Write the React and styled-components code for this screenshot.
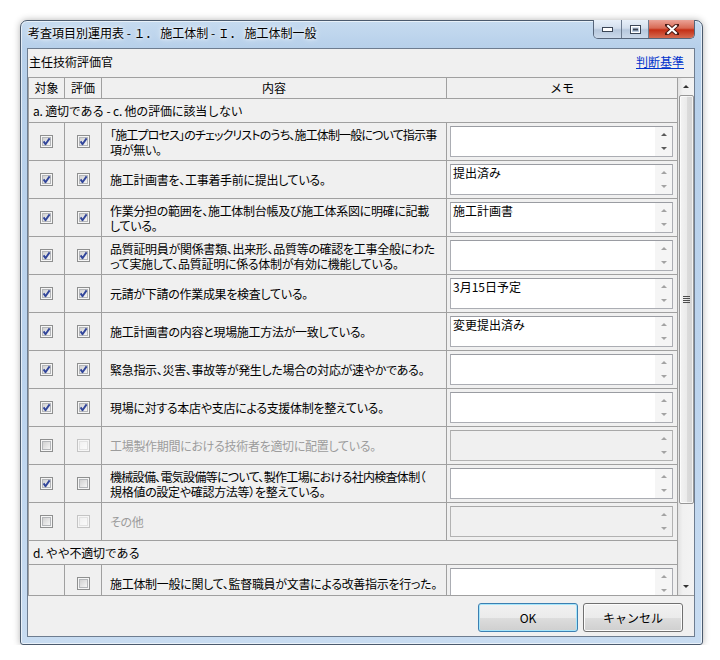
import React, { useId } from "react";
import styled, { createGlobalStyle } from "styled-components";

const GlobalStyle = createGlobalStyle`
  html, body { margin: 0; background: #ffffff; }
  body {
    font-family: "Noto Sans CJK JP", "Noto Sans", sans-serif;
    font-size: 12px;
    color: #000;
  }
  *, *::before, *::after { box-sizing: border-box; }
`;

const Page = styled.div`
  padding: 20px 0 0 20px;
`;

const Window = styled.div`
  width: 683px;
  height: 625px;
  display: flex;
  flex-direction: column;
  padding: 0 7px 7px 6px;
  border: 1px solid #4b5a6d;
  border-radius: 7px 7px 3px 3px;
  background: linear-gradient(180deg, #c6dbf0 0px, #b7d0ea 26px, #bcd4ee 60%, #c8dcf1 100%);
  box-shadow: 0 0 7px rgba(0, 0, 0, 0.3), inset 0 0 0 1px rgba(255, 255, 255, 0.6);
`;

const TitleBar = styled.div`
  height: 27px;
  display: flex;
  align-items: flex-start;
`;

const Title = styled.div`
  flex: 1;
  padding: 3px 0 0 1px;
  font-size: 12px;
  line-height: 18px;
  text-shadow: 0 0 6px #fff, 0 0 3px #fff;
`;

const Controls = styled.div`
  display: flex;
  height: 19px;
  margin-top: -1px;
  border: 1px solid #56657a;
  border-top: none;
  border-radius: 0 0 5px 5px;
  overflow: hidden;
`;

const CtlButton = styled.div`
  width: ${(p) => p.$w}px;
  display: flex;
  align-items: center;
  justify-content: center;
  background: ${(p) =>
    p.$close
      ? "linear-gradient(180deg, #eba397 0%, #d86a55 45%, #c42f16 55%, #d56c52 100%)"
      : "linear-gradient(180deg, #e8f0f9 0%, #d3dfed 45%, #b6c7dc 55%, #cbd9ea 100%)"};
  & + & {
    border-left: 1px solid #6c7b8f;
  }
`;

const Client = styled.div`
  flex: 1;
  min-height: 0;
  display: flex;
  flex-direction: column;
  background: #f0f0f0;
  border: 1px solid #6e7d90;
`;

const TopBar = styled.div`
  height: 28px;
  display: flex;
  align-items: center;
  justify-content: space-between;
  padding: 0 10px 3px 1px;
  line-height: 16px;
`;

const Link = styled.a`
  color: #0033cc;
  text-decoration: underline;
  cursor: pointer;
`;

const GridPanel = styled.div`
  flex: 1;
  min-height: 0;
  display: flex;
  overflow: hidden;
  border-top: 1px solid #a0a0a0;
  border-bottom: 1px solid #a0a0a0;
`;

const Table = styled.div`
  width: 650px;
  border-left: 1px solid #a0a0a0;
  overflow: hidden;
`;

const Row = styled.div`
  display: grid;
  grid-template-columns: 36px 37px 345px 231px;
  height: ${(p) => p.$h}px;
  flex-shrink: 0;
  border-bottom: 1px solid #a0a0a0;
`;

const Cell = styled.div`
  display: flex;
  align-items: center;
  justify-content: ${(p) => (p.$center ? "center" : "flex-start")};
  border-right: 1px solid #a0a0a0;
  min-width: 0;
`;

const HeadCell = styled(Cell)`
  justify-content: center;
  line-height: 16px;
`;

const SectionRow = styled.div`
  height: 24px;
  display: flex;
  align-items: center;
  padding-left: 4px;
  letter-spacing: -0.2px;
  border-right: 1px solid #a0a0a0;
  border-bottom: 1px solid #a0a0a0;
`;

const Content = styled.div`
  padding-left: 8px;
  line-height: 15px;
  white-space: nowrap;
  letter-spacing: -0.3px;
  font-feature-settings: "palt";
  color: ${(p) => (p.$disabled ? "#9c9c9c" : "#000")};
`;

const Line = styled.div`
  letter-spacing: ${(p) => (p.$ls != null ? `${p.$ls}px` : "inherit")};
`;

const MemoCell = styled.div`
  display: flex;
  padding: 3px 4px 3px 3px;
  border-right: 1px solid #a0a0a0;
`;

const MemoBox = styled.div`
  flex: 1;
  display: flex;
  border: 1px solid ${(p) => (p.$disabled ? "#b2b2b2" : "#abadb3")};
  border-top-color: ${(p) => (p.$disabled ? "#a8a8a8" : "#9a9ca2")};
  background: ${(p) => (p.$disabled ? "#f0f0f0" : "#ffffff")};
`;

const MemoText = styled.div`
  flex: 1;
  padding: 1px 2px;
  line-height: 14px;
  white-space: nowrap;
`;

const Spin = styled.div`
  width: 17px;
  display: flex;
  flex-direction: column;
  background: ${(p) => (p.$disabled ? "transparent" : "#f5f5f5")};
`;

const SpinHalf = styled.div`
  flex: 1;
  display: flex;
  align-items: center;
  justify-content: center;
`;

const Tri = styled.span`
  width: 0;
  height: 0;
  border-left: 3px solid transparent;
  border-right: 3px solid transparent;
  ${(p) => (p.$down ? "border-top" : "border-bottom")}: 3px solid ${(p) => p.$color};
`;

const ScrollBar = styled.div`
  width: 16px;
  display: flex;
  flex-direction: column;
  background: linear-gradient(90deg, #e2e2e2 0%, #f1f1f1 30%, #f3f3f3 100%);
`;

const ArrowBtn = styled.div`
  height: 17px;
  display: flex;
  align-items: center;
  justify-content: center;
`;

const Track = styled.div`
  flex: 1;
  padding: 0 0 0 1px;
`;

const Thumb = styled.div`
  height: 409px;
  border: 1px solid #979797;
  border-radius: 2px;
  background: linear-gradient(90deg, #f3f3f3 0%, #ebebeb 50%, #dcdcdc 51%, #d4d4d4 100%);
  box-shadow: inset 0 0 0 1px rgba(255, 255, 255, 0.7);
  display: flex;
  flex-direction: column;
  align-items: center;
  justify-content: center;
  gap: 1px;
`;

const Grip = styled.span`
  width: 7px;
  height: 1px;
  background: #4e4e4e;
`;

const ButtonBar = styled.div`
  height: 40px;
  display: flex;
  justify-content: flex-end;
  gap: 5px;
  padding: 7px 11px 0 0;
`;

const Button = styled.button`
  width: 100px;
  height: 29px;
  font-family: inherit;
  font-size: 12px;
  font-weight: 400;
  color: #000;
  border: 1px solid ${(p) => (p.$default ? "#3c7fb1" : "#707070")};
  border-radius: 3px;
  background: linear-gradient(180deg, #f2f2f2 0%, #ebebeb 50%, #dddddd 51%, #cfcfcf 100%);
  box-shadow: inset 0 0 0 1px ${(p) => (p.$default ? "#a6e6fb" : "#fcfcfc")};
  padding: 0;
`;

function CheckBox({ state }) {
  const gid = useId().replace(/:/g, "");
  if (state === "none") return null;
  const faint = state === "disabled";
  return (
    <svg width="13" height="13" viewBox="0 0 13 13">
      <defs>
        <linearGradient id={gid} x1="0" y1="0" x2="1" y2="1">
          <stop offset="0" stopColor={faint ? "#f0f0f0" : "#cfcfcf"} />
          <stop offset="1" stopColor={faint ? "#fbfbfb" : "#f7f7f7"} />
        </linearGradient>
      </defs>
      <rect x="0.5" y="0.5" width="12" height="12" fill="#f6f6f6" stroke={faint ? "#c4c4c4" : "#8e8f8f"} />
      <rect x="2.5" y="2.5" width="8" height="8" fill={`url(#${gid})`} stroke={faint ? "#e2e2e2" : "#b4b6b9"} />
      {state === "checked" && (
        <path d="M3.6 6.4 L5.5 9.2 L9.6 3.4" stroke="#31459a" strokeWidth="1.9" fill="none" strokeLinejoin="round" />
      )}
    </svg>
  );
}

function Memo({ text, disabled, dark }) {
  const col = dark ? "#5a5a5a" : "#a3a3a3";
  return (
    <MemoCell>
      <MemoBox $disabled={disabled}>
        <MemoText>{text}</MemoText>
        <Spin $disabled={disabled}>
          <SpinHalf>
            <Tri $color={col} />
          </SpinHalf>
          <SpinHalf>
            <Tri $down $color={col} />
          </SpinHalf>
        </Spin>
      </MemoBox>
    </MemoCell>
  );
}

const sectionA = [
  { a: "checked", b: "checked", lines: ["「施工プロセス」のチェックリストのうち、施工体制一般について指示事", "項が無い。"], ls: [-0.85], memo: "", dark: true },
  { a: "checked", b: "checked", lines: ["施工計画書を、工事着手前に提出している。"], memo: "提出済み" },
  { a: "checked", b: "checked", lines: ["作業分担の範囲を、施工体制台帳及び施工体系図に明確に記載", "している。"], memo: "施工計画書" },
  { a: "checked", b: "checked", lines: ["品質証明員が関係書類、出来形、品質等の確認を工事全般にわた", "って実施して、品質証明に係る体制が有効に機能している。"], memo: "" },
  { a: "checked", b: "checked", lines: ["元請が下請の作業成果を検査している。"], memo: "3月15日予定" },
  { a: "checked", b: "checked", lines: ["施工計画書の内容と現場施工方法が一致している。"], memo: "変更提出済み" },
  { a: "checked", b: "checked", lines: ["緊急指示、災害、事故等が発生した場合の対応が速やかである。"], memo: "" },
  { a: "checked", b: "checked", lines: ["現場に対する本店や支店による支援体制を整えている。"], memo: "" },
  { a: "unchecked", b: "disabled", lines: ["工場製作期間における技術者を適切に配置している。"], memo: "", disabled: true },
  { a: "checked", b: "unchecked", lines: ["機械設備、電気設備等について、製作工場における社内検査体制（", "規格値の設定や確認方法等）を整えている。"], ls: [-0.7], memo: "" },
  { a: "unchecked", b: "disabled", lines: ["その他"], memo: "", disabled: true },
];

const sectionD = [
  { a: "none", b: "unchecked", lines: ["施工体制一般に関して、監督職員が文書による改善指示を行った。"], memo: "" },
];

function ItemRow({ item }) {
  return (
    <Row $h={38}>
      <Cell $center>
        <CheckBox state={item.a} />
      </Cell>
      <Cell $center>
        <CheckBox state={item.b} />
      </Cell>
      <Cell>
        <Content $disabled={item.disabled}>
          {item.lines.map((l, i) => (
            <Line key={i} $ls={item.ls ? item.ls[i] : null}>
              {l}
            </Line>
          ))}
        </Content>
      </Cell>
      <Memo text={item.memo} disabled={item.disabled} dark={item.dark} />
    </Row>
  );
}

export default function App() {
  return (
    <Page>
      <GlobalStyle />
      <Window>
        <TitleBar>
          <Title>考査項目別運用表 - １． 施工体制 - Ｉ． 施工体制一般</Title>
          <Controls>
            <CtlButton $w={27}>
              <svg width="11" height="5" viewBox="0 0 11 5">
                <rect x="0.5" y="0.5" width="10" height="4" fill="#fff" stroke="#3b4656" />
              </svg>
            </CtlButton>
            <CtlButton $w={27}>
              <svg width="11" height="9" viewBox="0 0 11 9">
                <rect x="0.5" y="0.5" width="10" height="8" fill="none" stroke="#3b4656" />
                <rect x="1.5" y="1.5" width="8" height="6" fill="none" stroke="#fff" />
                <rect x="3" y="3.5" width="5" height="2" fill="#3b4656" />
              </svg>
            </CtlButton>
            <CtlButton $w={46} $close>
              <svg width="14" height="11" viewBox="0 0 14 11">
                <path d="M2 1 L12 10 M12 1 L2 10" stroke="#4a1a14" strokeWidth="4" strokeLinecap="square" />
                <path d="M2.3 1.3 L11.7 9.7 M11.7 1.3 L2.3 9.7" stroke="#ffffff" strokeWidth="2.2" />
              </svg>
            </CtlButton>
          </Controls>
        </TitleBar>
        <Client>
          <TopBar>
            <span>主任技術評価官</span>
            <Link>判断基準</Link>
          </TopBar>
          <GridPanel>
            <Table>
              <Row $h={21}>
                <HeadCell>対象</HeadCell>
                <HeadCell>評価</HeadCell>
                <HeadCell>内容</HeadCell>
                <HeadCell>メモ</HeadCell>
              </Row>
              <SectionRow>a. 適切である - c. 他の評価に該当しない</SectionRow>
              {sectionA.map((it, i) => (
                <ItemRow key={i} item={it} />
              ))}
              <SectionRow>d. やや不適切である</SectionRow>
              {sectionD.map((it, i) => (
                <ItemRow key={i} item={it} />
              ))}
            </Table>
            <ScrollBar>
              <ArrowBtn>
                <Tri $color="#333" />
              </ArrowBtn>
              <Track>
                <Thumb>
                  <Grip />
                  <Grip />
                  <Grip />
                  <Grip />
                </Thumb>
              </Track>
              <ArrowBtn>
                <Tri $down $color="#333" />
              </ArrowBtn>
            </ScrollBar>
          </GridPanel>
          <ButtonBar>
            <Button $default>OK</Button>
            <Button>キャンセル</Button>
          </ButtonBar>
        </Client>
      </Window>
    </Page>
  );
}
